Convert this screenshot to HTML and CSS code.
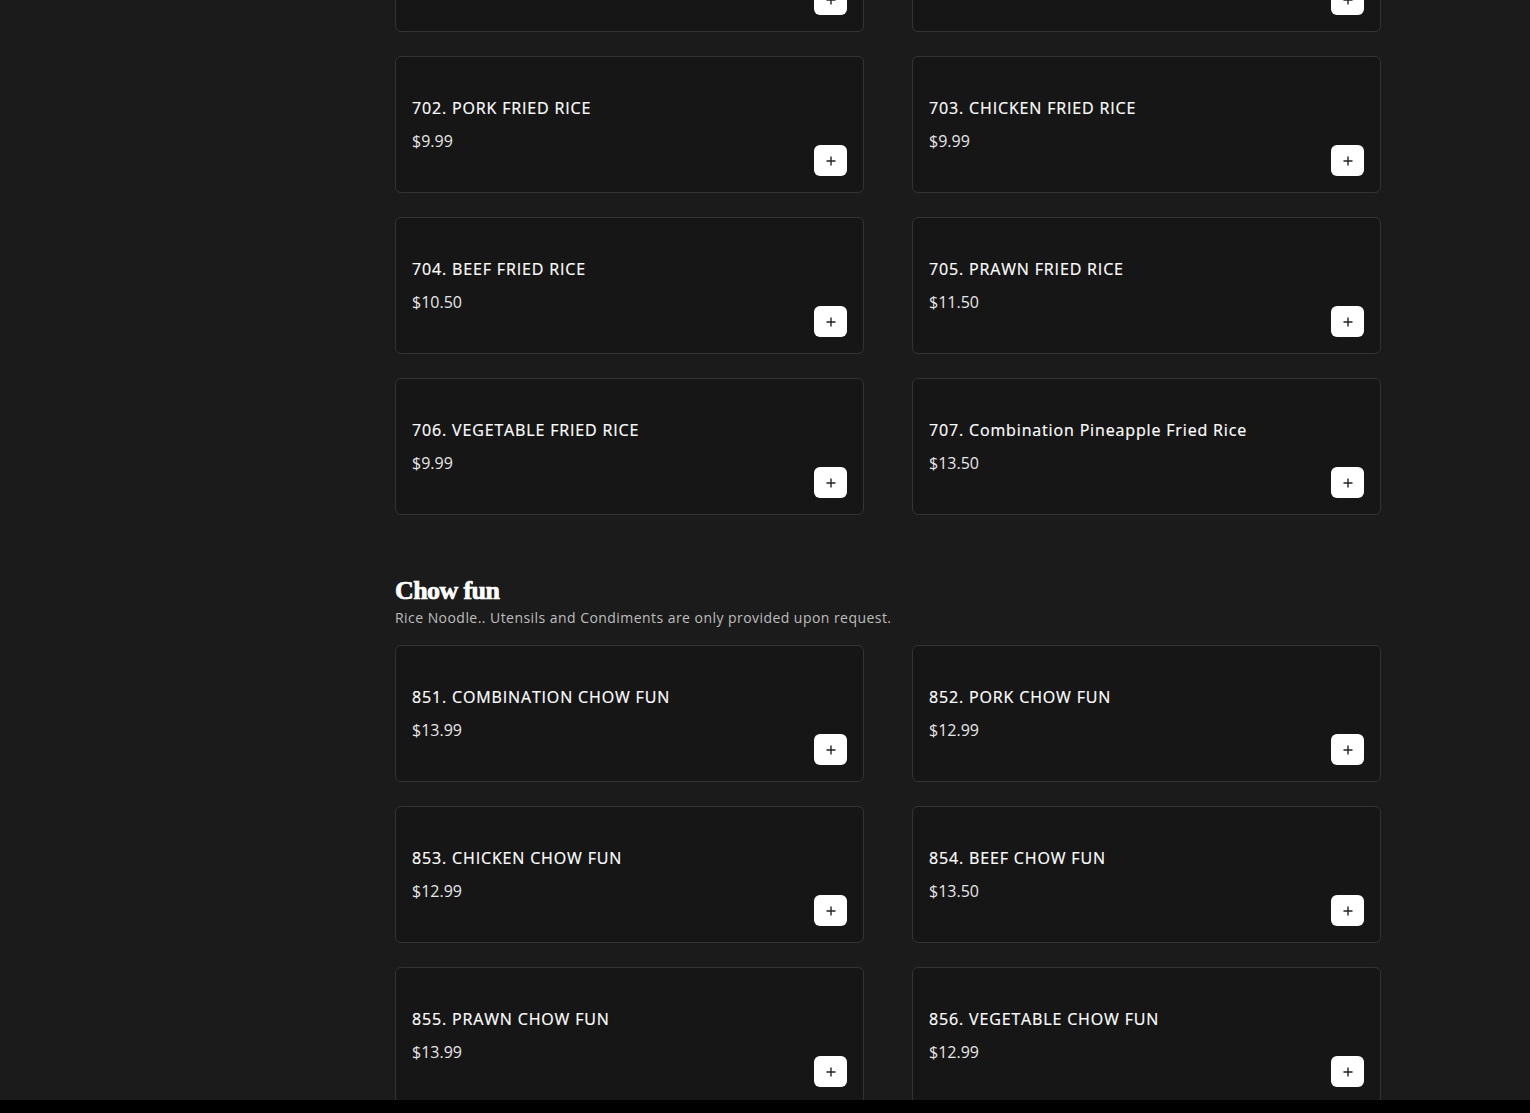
FILE: index.html
```html
<!DOCTYPE html>
<html>
<head>
<meta charset="utf-8">
<link rel="stylesheet" href="styles.css">
</head>
<body>
<main class="menu">
  <section class="section first">
    <div class="grid">
      <div class="card"><div class="info"><div class="name">700. HOUSE SPECIAL FRIED RICE</div><div class="price">$12.99</div></div><button class="add"><svg viewBox="0 0 10 10" width="10" height="10"><path d="M5 0.5V9.5M0.5 5H9.5" stroke="#222" stroke-width="1.4" fill="none"/></svg></button></div>
      <div class="card"><div class="info"><div class="name">701. COMBINATION FRIED RICE</div><div class="price">$12.99</div></div><button class="add"><svg viewBox="0 0 10 10" width="10" height="10"><path d="M5 0.5V9.5M0.5 5H9.5" stroke="#222" stroke-width="1.4" fill="none"/></svg></button></div>
      <div class="card"><div class="info"><div class="name">702. PORK FRIED RICE</div><div class="price">$9.99</div></div><button class="add"><svg viewBox="0 0 10 10" width="10" height="10"><path d="M5 0.5V9.5M0.5 5H9.5" stroke="#222" stroke-width="1.4" fill="none"/></svg></button></div>
      <div class="card"><div class="info"><div class="name">703. CHICKEN FRIED RICE</div><div class="price">$9.99</div></div><button class="add"><svg viewBox="0 0 10 10" width="10" height="10"><path d="M5 0.5V9.5M0.5 5H9.5" stroke="#222" stroke-width="1.4" fill="none"/></svg></button></div>
      <div class="card"><div class="info"><div class="name">704. BEEF FRIED RICE</div><div class="price">$10.50</div></div><button class="add"><svg viewBox="0 0 10 10" width="10" height="10"><path d="M5 0.5V9.5M0.5 5H9.5" stroke="#222" stroke-width="1.4" fill="none"/></svg></button></div>
      <div class="card"><div class="info"><div class="name">705. PRAWN FRIED RICE</div><div class="price">$11.50</div></div><button class="add"><svg viewBox="0 0 10 10" width="10" height="10"><path d="M5 0.5V9.5M0.5 5H9.5" stroke="#222" stroke-width="1.4" fill="none"/></svg></button></div>
      <div class="card"><div class="info"><div class="name">706. VEGETABLE FRIED RICE</div><div class="price">$9.99</div></div><button class="add"><svg viewBox="0 0 10 10" width="10" height="10"><path d="M5 0.5V9.5M0.5 5H9.5" stroke="#222" stroke-width="1.4" fill="none"/></svg></button></div>
      <div class="card"><div class="info"><div class="name">707. Combination Pineapple Fried Rice</div><div class="price">$13.50</div></div><button class="add"><svg viewBox="0 0 10 10" width="10" height="10"><path d="M5 0.5V9.5M0.5 5H9.5" stroke="#222" stroke-width="1.4" fill="none"/></svg></button></div>
    </div>
  </section>
  <section class="section">
    <h2 class="title">Chow fun</h2>
    <p class="desc">Rice Noodle.. Utensils and Condiments are only provided upon request.</p>
    <div class="grid">
      <div class="card"><div class="info"><div class="name">851. COMBINATION CHOW FUN</div><div class="price">$13.99</div></div><button class="add"><svg viewBox="0 0 10 10" width="10" height="10"><path d="M5 0.5V9.5M0.5 5H9.5" stroke="#222" stroke-width="1.4" fill="none"/></svg></button></div>
      <div class="card"><div class="info"><div class="name">852. PORK CHOW FUN</div><div class="price">$12.99</div></div><button class="add"><svg viewBox="0 0 10 10" width="10" height="10"><path d="M5 0.5V9.5M0.5 5H9.5" stroke="#222" stroke-width="1.4" fill="none"/></svg></button></div>
      <div class="card"><div class="info"><div class="name">853. CHICKEN CHOW FUN</div><div class="price">$12.99</div></div><button class="add"><svg viewBox="0 0 10 10" width="10" height="10"><path d="M5 0.5V9.5M0.5 5H9.5" stroke="#222" stroke-width="1.4" fill="none"/></svg></button></div>
      <div class="card"><div class="info"><div class="name">854. BEEF CHOW FUN</div><div class="price">$13.50</div></div><button class="add"><svg viewBox="0 0 10 10" width="10" height="10"><path d="M5 0.5V9.5M0.5 5H9.5" stroke="#222" stroke-width="1.4" fill="none"/></svg></button></div>
      <div class="card"><div class="info"><div class="name">855. PRAWN CHOW FUN</div><div class="price">$13.99</div></div><button class="add"><svg viewBox="0 0 10 10" width="10" height="10"><path d="M5 0.5V9.5M0.5 5H9.5" stroke="#222" stroke-width="1.4" fill="none"/></svg></button></div>
      <div class="card"><div class="info"><div class="name">856. VEGETABLE CHOW FUN</div><div class="price">$12.99</div></div><button class="add"><svg viewBox="0 0 10 10" width="10" height="10"><path d="M5 0.5V9.5M0.5 5H9.5" stroke="#222" stroke-width="1.4" fill="none"/></svg></button></div>
    </div>
  </section>
</main>
<div class="bottombar"></div>
</body>
</html>
```
FILE: styles.css
```css
html, body {
  margin: 0;
  padding: 0;
  background: #1b1b1b;
  height: 100%;
  overflow: hidden;
}
body {
  font-family: "Open Sans", "Liberation Sans", sans-serif;
  color: #fff;
}
.menu {
  width: 986px;
  margin: -105px 0 0 395px;
}
.section + .section {
  margin-top: 60px;
}
.grid {
  display: grid;
  grid-template-columns: 1fr 1fr;
  column-gap: 48px;
  row-gap: 24px;
}
.card {
  box-sizing: border-box;
  height: 137px;
  background: #161616;
  border: 1px solid #333;
  border-radius: 6px;
  padding: 16px;
  display: flex;
  justify-content: space-between;
  align-items: flex-end;
}
.info {
  align-self: flex-start;
  padding-top: 23px;
}
.name {
  font-size: 16px;
  font-weight: 500;
  line-height: 24px;
  letter-spacing: 0.85px;
  color: #fff;
  -webkit-text-stroke: 0.2px #fff;
}
.price {
  margin-top: 9px;
  font-size: 16px;
  line-height: 24px;
  color: #e6e6e6;
}
.add {
  width: 33px;
  height: 31px;
  border: none;
  border-radius: 6px;
  background: #fff;
  padding: 0;
  display: flex;
  align-items: center;
  justify-content: center;
}
.add svg {
  display: block;
}
.title {
  margin: 0;
  font-family: "Liberation Serif", serif;
  font-weight: 700;
  font-size: 26px;
  line-height: 32px;
  letter-spacing: -0.6px;
  color: #fff;
  -webkit-text-stroke: 0.7px #fff;
}
.desc {
  margin: 1px 0 17px;
  font-size: 14px;
  line-height: 20px;
  letter-spacing: 0.45px;
  color: #bdbdbd;
}
.bottombar {
  position: fixed;
  left: 0;
  right: 0;
  bottom: 0;
  height: 13px;
  background: #000;
}
```
